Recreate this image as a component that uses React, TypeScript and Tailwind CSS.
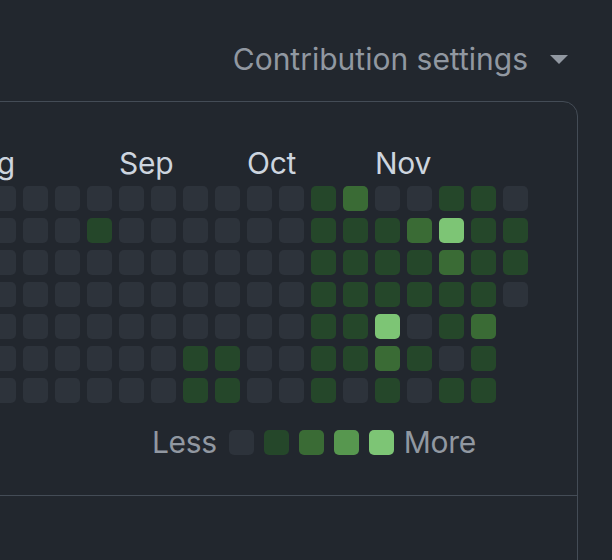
import React from "react";

const COLORS: Record<string, string> = {
  "0": "bg-[#2d333b]",
  "1": "bg-[#25472a]",
  "2": "bg-[#3a6b35]",
  "3": "bg-[#57974f]",
  "4": "bg-[#7dc575]",
};

// columns k = -6 .. 16 ; string per column, rows 0..6
const buildColumns = () => {
  const cols: { month?: string; cells: string }[] = [];
  for (let k = -6; k <= 16; k++) {
    let cells = "0000000";
    if (k === 3) cells = "0100000";
    if (k === 6 || k === 7) cells = "0000011";
    if (k === 10) cells = "1111111";
    if (k === 11) cells = "2111110";
    if (k === 12) cells = "0111421";
    if (k === 13) cells = "0211010";
    if (k === 14) cells = "1421101";
    if (k === 15) cells = "1111211";
    if (k === 16) cells = "0110---";
    let month: string | undefined;
    if (k === -5) month = "Jul";
    if (k === -1) month = "Aug";
    if (k === 4) month = "Sep";
    if (k === 8) month = "Oct";
    if (k === 12) month = "Nov";
    cols.push({ month, cells });
  }
  return cols;
};

const columns = buildColumns();

export default function App() {
  return (
    <div className="w-[612px] h-[560px] overflow-hidden bg-[#22272e] font-['Inter','Liberation_Sans',sans-serif]">
      <div className="pt-[44px] pr-[44px] flex justify-end items-center gap-[22px]">
        <span className="text-[30px] leading-[30px] text-[#9198a1] whitespace-nowrap">
          Contribution settings
        </span>
        <svg width="18" height="10" viewBox="0 0 18 10" className="mt-[2px]">
          <path d="M0 0 H18 L9 9 Z" fill="#9198a1" />
        </svg>
      </div>
      <div className="mt-[27px] ml-[-200px] mr-[34px] border border-[#444c56] rounded-[15px] h-[560px] overflow-hidden">
        <div className="border-b border-[#444c56] pt-[46px] pb-[40px]">
          <div className="flex justify-end pr-[49px] gap-[7px]">
            {columns.map((col, i) => (
              <div key={i} className="flex flex-col w-[25px] shrink-0">
                <div className="relative h-[30px] mb-[8px]">
                  {col.month && (
                    <span className="absolute left-0 top-0 text-[30px] leading-[30px] text-[#cdd5df] whitespace-nowrap tracking-[-0.3px]">
                      {col.month}
                    </span>
                  )}
                </div>
                <div className="flex flex-col gap-[7px]">
                  {col.cells.split("").map((c, r) =>
                    c === "-" ? (
                      <div key={r} className="w-[25px] h-[25px]" />
                    ) : (
                      <div key={r} className={`w-[25px] h-[25px] rounded-[5px] ${COLORS[c]}`} />
                    )
                  )}
                </div>
              </div>
            ))}
          </div>
          <div className="flex justify-end items-center pr-[101px] mt-[27px] h-[25px] gap-[10px]">
            <span className="text-[30px] leading-[25px] text-[#9198a1] mr-[2px] tracking-[-0.3px]">Less</span>
            <div className="w-[25px] h-[25px] rounded-[5px] bg-[#2d333b]" />
            <div className="w-[25px] h-[25px] rounded-[5px] bg-[#25472a]" />
            <div className="w-[25px] h-[25px] rounded-[5px] bg-[#3a6b35]" />
            <div className="w-[25px] h-[25px] rounded-[5px] bg-[#57974f]" />
            <div className="w-[25px] h-[25px] rounded-[5px] bg-[#7dc575]" />
            <span className="text-[30px] leading-[25px] text-[#9198a1] tracking-[-0.3px]">More</span>
          </div>
        </div>
      </div>
    </div>
  );
}
